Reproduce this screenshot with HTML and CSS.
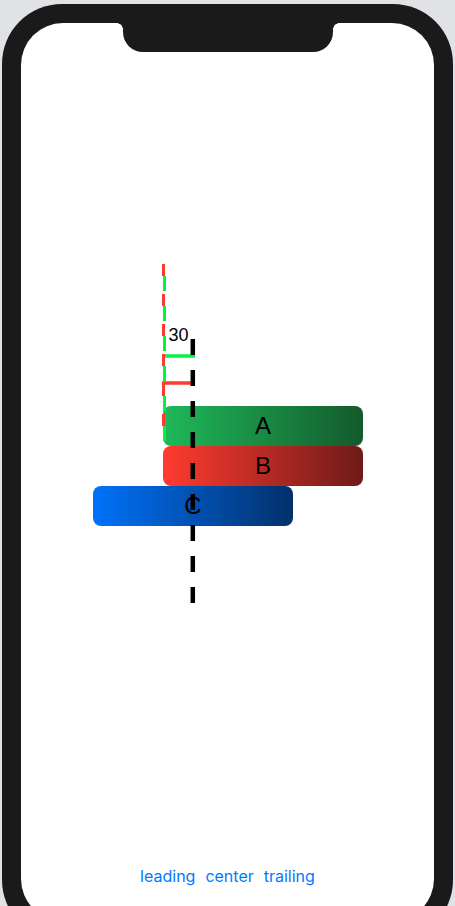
FILE: index.html
```html
<!DOCTYPE html>
<html>
<head>
<meta charset="utf-8">
<link rel="stylesheet" href="styles.css">
</head>
<body>
<div class="phone">
  <div class="screen">
    <div class="notch"></div>
    <div class="stack">
      <div class="box box-a">A</div>
      <div class="box box-b">B</div>
      <div class="box box-c">C</div>
    </div>
    <div class="toolbar">
      <span class="btn">leading</span>
      <span class="btn">center</span>
      <span class="btn">trailing</span>
    </div>
    <svg class="guides" viewBox="21 23 413 898" width="413" height="898">
      <line x1="163.5" y1="264" x2="163.5" y2="443" stroke="#ff3b30" stroke-width="3" stroke-dasharray="12 18"/>
      <line x1="164.5" y1="276" x2="164.5" y2="441" stroke="#00f540" stroke-width="3" stroke-dasharray="15 15"/>
      <line x1="165" y1="356" x2="195" y2="356" stroke="#00f540" stroke-width="3.5"/>
      <line x1="162" y1="383" x2="193" y2="383" stroke="#ff3b30" stroke-width="3.5"/>
      <line x1="192.8" y1="339" x2="192.8" y2="603" stroke="#000" stroke-width="4.5" stroke-dasharray="16 15"/>
      <text x="168.5" y="341" class="label">30</text>
    </svg>
  </div>
</div>
</body>
</html>
```

FILE: styles.css
```css
html, body {
  margin: 0;
  padding: 0;
  width: 455px;
  height: 906px;
  overflow: hidden;
  background: #e1e2e6;
}

.phone {
  box-sizing: border-box;
  width: 451px;
  height: 936px;
  margin: 4px 0 0 2px;
  padding: 19px;
  background: #1a1a1a;
  border-radius: 60px;
}

.screen {
  position: relative;
  height: 100%;
  background: #ffffff;
  border-radius: 42px;
  display: flex;
  flex-direction: column;
}

.notch {
  position: absolute;
  top: 0;
  left: 102px;
  width: 210px;
  height: 29px;
  background: #1a1a1a;
  border-radius: 0 0 20px 20px;
}

.notch::before,
.notch::after {
  content: "";
  position: absolute;
  top: 0;
  width: 6px;
  height: 6px;
}

.notch::before {
  left: -6px;
  background: radial-gradient(circle at 0 100%, transparent 5.5px, #1a1a1a 6px);
}

.notch::after {
  right: -6px;
  background: radial-gradient(circle at 100% 100%, transparent 5.5px, #1a1a1a 6px);
}

.stack {
  display: flex;
  flex-direction: column;
  margin: 383px 0 0 142px;
}

.box {
  width: 200px;
  height: 40px;
  border-radius: 8px;
  display: flex;
  align-items: center;
  justify-content: center;
  font-family: "Liberation Sans", Arial, sans-serif;
  font-size: 24px;
  color: #000;
}

.box-a {
  background: linear-gradient(to right, #1fb95a, #145a2c);
}

.box-b {
  background: linear-gradient(to right, #ff3b30, #6e1a17);
}

.box-c {
  margin-left: -70px;
  background: linear-gradient(to right, #0072fa, #03306b);
}

.toolbar {
  margin-top: auto;
  padding-bottom: 35px;
  display: flex;
  justify-content: center;
  gap: 10px;
  font-family: Inter, "Liberation Sans", sans-serif;
  font-size: 16px;
  line-height: 20px;
  color: #007aff;
}

.guides {
  position: absolute;
  left: 0;
  top: 0;
  pointer-events: none;
}

.label {
  font-family: "Liberation Sans", Arial, sans-serif;
  font-size: 18px;
  fill: #000;
}
```
